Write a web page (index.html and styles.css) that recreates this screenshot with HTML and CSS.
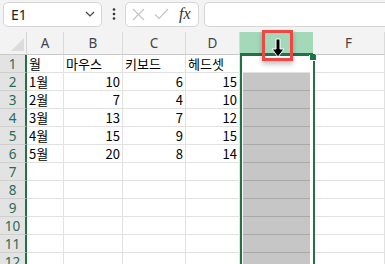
FILE: index.html
```html
<!DOCTYPE html>
<html>
<head>
	<title>Excel column select</title>
	<meta charset="utf-8">
	<link rel="stylesheet" href="styles.css">
</head>
<body>

	<div class="formula-bar">
		<div class="name-box">
			<span>E1</span>
			<svg class="chevron" width="10" height="6" viewBox="0 0 10 6"><path d="M1 1 L5 5 L9 1" fill="none" stroke="#444" stroke-width="1.2"/></svg>
		</div>
		<div class="dots">
			<svg width="4" height="14" viewBox="0 0 4 14"><circle cx="2" cy="2.5" r="1.3" fill="#333"/><circle cx="2" cy="7" r="1.3" fill="#333"/><circle cx="2" cy="11.5" r="1.3" fill="#333"/></svg>
		</div>
		<div class="fx-box">
			<svg width="13" height="13" viewBox="0 0 13 13"><path d="M1 1 L12 12 M12 1 L1 12" stroke="#c4c4c4" stroke-width="1.1"/></svg>
			<svg width="15" height="12" viewBox="0 0 15 12"><path d="M1 6.5 L5 10.5 L14 1" fill="none" stroke="#c4c4c4" stroke-width="1.1"/></svg>
			<span class="fx">fx</span>
		</div>
		<div class="formula-input"></div>
	</div>

	<div class="sheet">
		<div class="grid">
			<div class="corner"></div>
			<div class="hd">A</div>
			<div class="hd">B</div>
			<div class="hd">C</div>
			<div class="hd">D</div>
			<div class="hd hd-sel"></div>
			<div class="hd">F</div>

			<div class="rh">1</div>
			<div class="c">월</div>
			<div class="c">마우스</div>
			<div class="c">키보드</div>
			<div class="c">헤드셋</div>
			<div class="c act"></div>
			<div class="c"></div>

			<div class="rh">2</div>
			<div class="c">1월</div>
			<div class="c num">10</div>
			<div class="c num">6</div>
			<div class="c num">15</div>
			<div class="c sel"></div>
			<div class="c"></div>

			<div class="rh">3</div>
			<div class="c">2월</div>
			<div class="c num">7</div>
			<div class="c num">4</div>
			<div class="c num">10</div>
			<div class="c sel"></div>
			<div class="c"></div>

			<div class="rh">4</div>
			<div class="c">3월</div>
			<div class="c num">13</div>
			<div class="c num">7</div>
			<div class="c num">12</div>
			<div class="c sel"></div>
			<div class="c"></div>

			<div class="rh">5</div>
			<div class="c">4월</div>
			<div class="c num">15</div>
			<div class="c num">9</div>
			<div class="c num">15</div>
			<div class="c sel"></div>
			<div class="c"></div>

			<div class="rh">6</div>
			<div class="c">5월</div>
			<div class="c num">20</div>
			<div class="c num">8</div>
			<div class="c num">14</div>
			<div class="c sel"></div>
			<div class="c"></div>

			<div class="rh">7</div>
			<div class="c"></div><div class="c"></div><div class="c"></div><div class="c"></div>
			<div class="c sel"></div><div class="c"></div>

			<div class="rh">8</div>
			<div class="c"></div><div class="c"></div><div class="c"></div><div class="c"></div>
			<div class="c sel"></div><div class="c"></div>

			<div class="rh">9</div>
			<div class="c"></div><div class="c"></div><div class="c"></div><div class="c"></div>
			<div class="c sel"></div><div class="c"></div>

			<div class="rh">10</div>
			<div class="c"></div><div class="c"></div><div class="c"></div><div class="c"></div>
			<div class="c sel"></div><div class="c"></div>

			<div class="rh">11</div>
			<div class="c"></div><div class="c"></div><div class="c"></div><div class="c"></div>
			<div class="c sel"></div><div class="c"></div>

			<div class="rh">12</div>
			<div class="c"></div><div class="c"></div><div class="c"></div><div class="c"></div>
			<div class="c sel"></div><div class="c"></div>
		</div>

		<!-- selection outline for column E -->
		<div class="selection"><span class="handle"></span></div>

		<!-- highlighted column-select cursor -->
		<div class="cursor-box">
			<svg width="14" height="20" viewBox="0 0 14 20"><path d="M5 1 H9 V11 H13 L7 19 L1 11 H5 Z" fill="#000" stroke="#fff" stroke-width="1"/></svg>
		</div>
	</div>

</body>
</html>
```

FILE: styles.css
```css
body,html{
	margin:0;
	background:#f3f3f3;
	font-family:"Noto Sans", "Noto Sans CJK KR", sans-serif;
	width:385px;
	height:264px;
	overflow:hidden;
}

.formula-bar{
	display:flex;
	align-items:center;
	height:32px;
	padding:0 0 4px 3px;
	box-sizing:border-box;
}

.name-box,.fx-box,.formula-input{
	height:25px;
	box-sizing:border-box;
	background:white;
	border:1px solid #d6d6d6;
	border-radius:5px;
}

.name-box{
	width:99px;
	display:flex;
	align-items:center;
	justify-content:space-between;
	padding:0 6px 0 7px;
	font-size:14px;
	color:#222;
}

.dots{
	width:23px;
	display:flex;
	justify-content:center;
}

.fx-box{
	width:74px;
	display:flex;
	align-items:center;
	padding-left:6px;
	gap:9px;
}

.fx{
	font-family:"Liberation Serif", serif;
	font-style:italic;
	font-size:16px;
	color:#333;
	margin-left:1px;
}

.formula-input{
	flex:1;
	margin-left:5px;
	border-right:none;
	border-radius:5px 0 0 5px;
}

.sheet{
	position:relative;
	height:232px;
}

.grid{
	display:grid;
	grid-template-columns:27px 37px 59px 63px 54px 73px 1fr;
	grid-template-rows:23px repeat(12, 18px);
	background:white;
}

.grid > div{
	box-sizing:border-box;
}

.corner{
	background:#f3f3f3;
	border-right:1px solid #d6d6d6;
	border-bottom:1px solid #c8c8c8;
	position:relative;
}

.corner::after{
	content:"";
	position:absolute;
	right:2px;
	bottom:3px;
	border-style:solid;
	border-width:0 0 13px 13px;
	border-color:transparent transparent #dcdcdc transparent;
}

.hd{
	background:#f3f3f3;
	border-right:1px solid #dadada;
	border-bottom:1px solid #c8c8c8;
	text-align:center;
	font-size:13.5px;
	line-height:22px;
	color:#444;
}

.hd-sel{
	background:#a3d9b9;
	border-bottom:2px solid #217346;
	border-right:none;
}

.rh{
	background:#e3e3e3;
	border-right:2px solid #217346;
	border-bottom:1px solid #cfcfcf;
	text-align:center;
	font-size:13.5px;
	line-height:18px;
	color:#2a6b58;
}

.c{
	border-right:1px solid #e1e1e1;
	border-bottom:1px solid #e1e1e1;
	font-family:"Noto Sans CJK KR", sans-serif;
	font-size:13px;
	line-height:17px;
	padding:0 2px;
	color:#000;
	white-space:nowrap;
}

.num{
	text-align:right;
}

.sel{
	background:#c6c6c6;
	border-bottom:1px solid #a9a9a9;
	border-right:none;
}

.selection{
	position:absolute;
	left:240px;
	top:22px;
	width:75px;
	height:230px;
	box-sizing:border-box;
	border:2px solid #217346;
	border-bottom:none;
	box-shadow:inset -3px 0 0 white, inset 1px 0 0 white;
}

.handle{
	position:absolute;
	right:-3px;
	top:-1px;
	width:6px;
	height:5px;
	background:#217346;
	border-left:1px solid white;
	border-bottom:1px solid white;
}

.cursor-box{
	position:absolute;
	left:262px;
	top:-2px;
	width:31px;
	height:31px;
	box-sizing:border-box;
	border:3px solid #f04646;
	box-shadow:0 3px 5px rgba(0,0,0,0.25);
	display:flex;
	justify-content:center;
	padding-top:5px;
}
```
